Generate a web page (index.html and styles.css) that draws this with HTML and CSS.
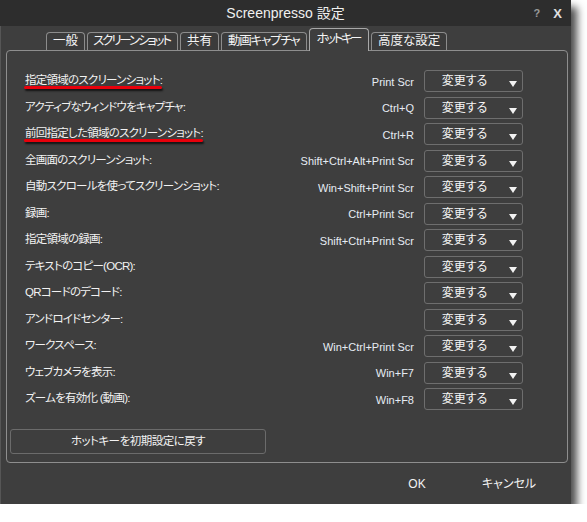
FILE: index.html
```html
<!DOCTYPE html>
<html lang="ja">
<head>
<meta charset="utf-8">
<title>Screenpresso 設定</title>
<link rel="stylesheet" href="styles.css">
</head>
<body>
<div class="window">
  <div class="titlebar">
    <span></span>
    <span class="title">Screenpresso 設定</span>
    <span class="controls"><span class="help">?</span><span class="close">X</span></span>
  </div>
  <div class="tabs">
    <span class="tab">一般</span>
    <span class="tab kana">スクリーンショット</span>
    <span class="tab">共有</span>
    <span class="tab kana3">動画キャプチャ</span>
    <span class="tab active">ホットキー</span>
    <span class="tab">高度な設定</span>
  </div>
  <div class="panel">
    <div class="rows">
      <div class="row"><span class="label"><span class="mark">指定領域のスクリーンショット:</span></span><span class="key">Print Scr</span><span class="drop">変更する<i class="arrow"></i></span></div>
      <div class="row"><span class="label">アクティブなウィンドウをキャプチャ:</span><span class="key">Ctrl+Q</span><span class="drop">変更する<i class="arrow"></i></span></div>
      <div class="row"><span class="label"><span class="mark">前回指定した領域のスクリーンショット:</span></span><span class="key">Ctrl+R</span><span class="drop">変更する<i class="arrow"></i></span></div>
      <div class="row"><span class="label">全画面のスクリーンショット:</span><span class="key">Shift+Ctrl+Alt+Print Scr</span><span class="drop">変更する<i class="arrow"></i></span></div>
      <div class="row"><span class="label">自動スクロールを使ってスクリーンショット:</span><span class="key">Win+Shift+Print Scr</span><span class="drop">変更する<i class="arrow"></i></span></div>
      <div class="row"><span class="label">録画:</span><span class="key">Ctrl+Print Scr</span><span class="drop">変更する<i class="arrow"></i></span></div>
      <div class="row"><span class="label">指定領域の録画:</span><span class="key">Shift+Ctrl+Print Scr</span><span class="drop">変更する<i class="arrow"></i></span></div>
      <div class="row"><span class="label">テキストのコピー(OCR):</span><span class="key"></span><span class="drop">変更する<i class="arrow"></i></span></div>
      <div class="row"><span class="label">QRコードのデコード:</span><span class="key"></span><span class="drop">変更する<i class="arrow"></i></span></div>
      <div class="row"><span class="label">アンドロイドセンター:</span><span class="key"></span><span class="drop">変更する<i class="arrow"></i></span></div>
      <div class="row"><span class="label">ワークスペース:</span><span class="key">Win+Ctrl+Print Scr</span><span class="drop">変更する<i class="arrow"></i></span></div>
      <div class="row"><span class="label">ウェブカメラを表示:</span><span class="key">Win+F7</span><span class="drop">変更する<i class="arrow"></i></span></div>
      <div class="row"><span class="label">ズームを有効化 (動画):</span><span class="key">Win+F8</span><span class="drop">変更する<i class="arrow"></i></span></div>
    </div>
    <div class="reset-wrap"><span class="reset">ホットキーを初期設定に戻す</span></div>
  </div>
  <div class="footer">
    <span class="fbtn ok">OK</span>
    <span class="fbtn cancel">キャンセル</span>
  </div>
</div>
</body>
</html>
```

FILE: styles.css
```css
* { box-sizing: border-box; }
html, body { margin: 0; padding: 0; background: #ffffff; }
body {
  font-family: "Liberation Sans", "Noto Sans CJK JP", sans-serif;
  font-size: 11px;
  color: #f2f2f2;
  font-feature-settings: "palt";
}
.window {
  width: 571px;
  height: 504px;
  background: #3e3e3e;
  box-shadow: 6px 7px 8px rgba(0,0,0,0.7), inset 1px 0 0 #565656;
}
.titlebar {
  height: 26px;
  background: #2d2d2d;
  display: grid;
  grid-template-columns: 1fr auto 1fr;
  align-items: center;
}
.title {
  font-size: 14px;
  color: #f0f0f0;
  padding-bottom: 2px;
}
.controls {
  justify-self: end;
  display: flex;
  align-items: center;
  gap: 13px;
  padding-right: 9px;
  font-weight: bold;
}
.help { color: #9a9a9a; font-size: 11px; }
.close { color: #e0e0e0; font-size: 13px; }
.tabs {
  display: flex;
  align-items: flex-end;
  gap: 2px;
  padding-left: 46px;
  height: 22px;
  margin-top: 2px;
  position: relative;
  z-index: 1;
}
.tab {
  height: 18px;
  padding: 0 6px;
  border: 1px solid #8c8c8c;
  border-bottom: none;
  border-radius: 4px 4px 0 0;
  background: #3b3b3b;
  font-size: 12.5px;
  line-height: 17px;
  color: #f4f4f4;
}
.tab.kana { letter-spacing: -2.1px; padding: 0 7px 0 5px; }
.tab.kana3 { letter-spacing: -1.2px; padding: 0 7px 0 6px; }
.tab.active {
  height: 23px;
  padding: 0 8px 0 6px;
  line-height: 21px;
  background: #3e3e3e;
  border-color: #a8a8a8;
  margin-bottom: -1px;
  letter-spacing: -2.4px;
}
.panel {
  margin: 0 3px 0 6px;
  height: 413px;
  border: 1px solid #8e8e8e;
  border-radius: 4px;
  padding-top: 17px;
}
.rows { padding: 0 44px 0 18px; }
.row {
  height: 26.5px;
  display: grid;
  grid-template-columns: 1fr auto 99px;
  column-gap: 10px;
  align-items: center;
}
.label { white-space: nowrap; letter-spacing: -0.75px; padding-bottom: 4px; font-size: 11.5px; }
.mark { position: relative; }
.mark::after {
  content: "";
  position: absolute;
  left: -1px;
  right: 0;
  bottom: -3px;
  height: 3px;
  background: #e8000b;
  border-radius: 2px;
  box-shadow: 1px 2px 2px rgba(0,0,0,0.7);
}
.key {
  text-align: right;
  color: #e6ecf4;
  padding-top: 1px;
}
.drop {
  height: 22px;
  border: 1px solid #6e6e6e;
  border-radius: 3px;
  position: relative;
  text-align: center;
  line-height: 20px;
  padding-right: 18px;
  font-size: 12px;
  color: #f6f6f6;
  display: block;
}
.arrow {
  position: absolute;
  right: 5px;
  bottom: 4px;
  width: 0;
  height: 0;
  border-left: 4px solid transparent;
  border-right: 4px solid transparent;
  border-top: 6px solid #f2f2f2;
}
.reset-wrap { padding: 16px 0 0 3px; }
.reset {
  display: block;
  width: 256px;
  height: 25px;
  border: 1px solid #6b6b6b;
  border-radius: 3px;
  text-align: center;
  line-height: 23px;
  font-size: 11.5px;
  letter-spacing: -0.5px;
}
.footer {
  display: flex;
  justify-content: flex-end;
  padding: 12px 22px 0 0;
  gap: 12px;
}
.fbtn {
  width: 80px;
  text-align: center;
  font-size: 12px;
  line-height: 18px;
}
```
